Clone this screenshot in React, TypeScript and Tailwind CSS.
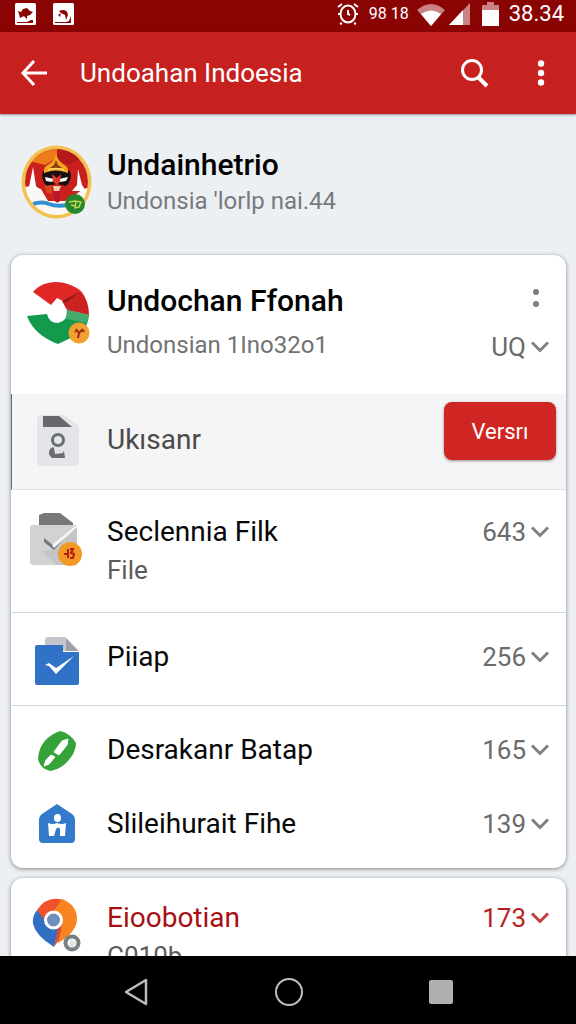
import type { ReactNode } from 'react';

const Chevron = () => (
  <svg viewBox="0 0 20 14" className="w-5 h-3.5 shrink-0 opacity-85" fill="none" stroke="currentColor" strokeWidth="3">
    <path d="M2 2.5l8 8 8-8" />
  </svg>
);

const GarudaAvatar = () => (
  <svg viewBox="0 0 72 74" className="w-[72px] h-[74px]">
    <clipPath id="avatar"><ellipse cx="35.5" cy="37" rx="31.5" ry="33" /></clipPath>
    <ellipse cx="35.5" cy="37" rx="35" ry="36.5" fill="#f2c14e" />
    <g clipPath="url(#avatar)">
      <rect width="72" height="74" fill="#fbf7f2" />
      <path d="M0 0h72v42l-10 2-8 6-10 6H27l-7-12-8-3-12 1z" fill="#c9201c" />
      <path d="M0 0h36v13l-12 7L8 16z" fill="#ef7a1a" />
      <path d="M36 4v10l12 6 14-8L50 0z" fill="#b3181a" />
      <path d="M12 22l-4 20-2 4h14l-5-5zM57 24l-1 16-5 6h14l-4-6z" fill="#fff" />
      <path d="M22 26q14-6 27 0 3 9-4 15l-9-2-10 2q-7-6-4-15z" fill="#1b1011" />
      <path d="M23 41l8-1v9l-5-1z" fill="#d9481c" />
      <path d="M35 9q2 7 7 10 6 3 5 9-12-5-24 0-1-6 5-9t7-10z" fill="#f3a51f" />
      <path d="M35 15l2 5 4 3h-12l4-3z" fill="#8a3f10" />
      <path d="M27 25q8-3 16 0" stroke="#ffd767" strokeWidth="1.5" fill="none" />
      <path d="M24 32l9 2-2 3-6-1zM38 34l9-2-2 4-6 1z" fill="#fff" />
      <path d="M31 29l5 4 4-4-1 8-3 3-4-3z" fill="#e1382a" />
      <path d="M32 41h8l-2 5h-5z" fill="#f1cfae" />
      <path d="M33 46h6v10q-3 3-5 0z" fill="#b5182b" />
      <path d="M12 59q9-3 16 0 8 3 19 1" stroke="#2f8fd0" strokeWidth="4" fill="none" />
    </g>
    <circle cx="54" cy="59" r="10" fill="#26862b" />
    <path d="M48 57l6-1 6 1-2 5-5 1M50 60l4 1M55 57l-1 5" fill="none" stroke="#b9d957" strokeWidth="1.5" />
  </svg>
);

const RibbonIcon = () => (
  <svg viewBox="0 0 66 66" className="w-[66px] h-[66px]">
    <path d="M7 11C17-1 38-3 55 10L37 20 31 17 25 24z" fill="#df2826" />
    <path d="M55 10Q63 20 63 34L41 29 36 20z" fill="#cc2221" />
    <path d="M55 10L36 20l4 2z" fill="#98191b" />
    <path d="M1 35l20-2q2 9 11 9 10-2 9-13l22 5q-2 17-14 21L32 63Q8 54 1 35z" fill="#139a4c" />
    <path d="M41 29l22 5-2 8-21-4z" fill="#45a86c" />
    <circle cx="53" cy="52" r="10.5" fill="#f2a02f" />
    <path d="M50 48l3 4 4-4M53 52l-1 5M49 50l1 1M57 51l1-2" stroke="#9c2a12" strokeWidth="2" fill="none" />
  </svg>
);

const ContactFileIcon = () => (
  <svg viewBox="0 0 42 52" className="w-[42px] h-[52px]">
    <path d="M5 1h22l15 11v36q0 4-4 4H4q-4 0-4-4V5q0-4 5-4z" fill="#e3e5e8" />
    <path d="M6 2h16l13 11H6z" fill="#67686b" />
    <circle cx="21" cy="26" r="5.5" fill="#dfe6ed" stroke="#6c6d70" strokeWidth="3" />
    <path d="M13 35l3-2q3 4 11 4l1 7H15q-5-4-2-9z" fill="#6c6d70" />
    <path d="M17 34q6 4 10 2l-1 3-8 1z" fill="#e3e5e8" />
  </svg>
);

const EnvelopeIcon = () => (
  <svg viewBox="0 0 54 56" className="w-[54px] h-14">
    <path d="M9 3l5-2h16l13 10v5H9z" fill="#77787a" />
    <path d="M3 13h44v37q0 3-3 3H3q-3 0-3-3V16q0-3 3-3z" fill="#d0d2d4" />
    <path d="M47 15v38H26L12 39l12-2z" fill="#c3c5c7" />
    <path d="M14 26l9 7L46 13 24 38 14 30z" fill="#77787a" />
    <path d="M22 33L46 13l1 2-23 21z" fill="#f6f6f6" />
    <circle cx="40" cy="42" r="12" fill="#f39a26" />
    <path d="M34 42h5M38 37v9M40 37h3l-2 4 3 1-1 4h-3" stroke="#b3200f" strokeWidth="2" fill="none" />
  </svg>
);

const TaskFileIcon = () => (
  <svg viewBox="0 0 44 48" className="w-11 h-12">
    <path d="M10 3q0-3 3-3h17l14 14H10z" fill="#c3c6ca" />
    <path d="M31 1l12 13H31z" fill="#9c9fa5" />
    <path d="M2 8h26v7h16v31q0 2-2 2H2q-2 0-2-2V10q0-2 2-2z" fill="#2f72c6" />
    <path d="M10 28l4-2 7 5 18-12-18 18-7-8z" fill="#fff" />
  </svg>
);

const LeafIcon = () => (
  <svg viewBox="0 0 38 42" className="w-[38px] h-[42px]">
    <path d="M22 1q10 2 16 12c0 12-12 26-26 28Q1 38 0 28 2 8 22 1z" fill="#36a33a" />
    <path d="M24 11l6-2-1 6-8 10-5-3zM13 25l4 2-6 7-5 2 2-6z" fill="#fff" stroke="#fff" />
  </svg>
);

const HouseIcon = () => (
  <svg viewBox="0 0 38 40" className="w-[38px] h-10">
    <path d="M19 0l15 10q3 2 3 5v20q0 4-4 4H5q-4 0-4-4V15q0-3 3-5z" fill="#347acb" />
    <ellipse cx="19.500" cy="14" rx="3.500" ry="4" fill="#fff" />
    <path d="M10 19q5 2 9 0 5 2 9 0l-1 13h-5v-7q-2-3-4 0l-2 7h-5z" fill="#fff" />
  </svg>
);

const PinIcon = () => (
  <svg viewBox="0 0 50 54" className="w-[50px] h-[54px]">
    <path d="M5 12Q0 18 1 26q3 12 21 23l5-20z" fill="#3070c2" />
    <path d="M5 12Q16-4 34 3L24 18 14 24z" fill="#f0522b" />
    <path d="M30 1q15 6 15 20 0 13-19 24l1-18-8-10z" fill="#f78421" />
    <path d="M26 28l-4 21 5-7 3-15z" fill="#d74f3c" />
    <circle cx="21.500" cy="22" r="8" fill="#6c90b9" stroke="#fff" strokeWidth="3" />
    <circle cx="40" cy="45" r="6.500" fill="#fff" stroke="#7b7e80" strokeWidth="4" />
    <path d="M39 41l5 4-3 4-4-1z" fill="#dfe2e3" />
  </svg>
);

type RowProps = {
  icon: ReactNode;
  title: string;
  subtitle?: string;
  count: string;
  className: string;
  accent?: boolean;
};

const FileRow = ({ icon, title, subtitle, count, className, accent }: RowProps) => (
  <div className={`flex pr-4 ${className}`}>
    <div className="w-24 pr-1 shrink-0 flex justify-center">{icon}</div>
    <div className="flex-1 min-w-0 whitespace-nowrap">
      <h3 className={`text-[28px] leading-10 ${accent ? 'text-[#a80f13]' : 'text-[#080808]'}`}>{title}</h3>
      {subtitle && <p className="text-[26px] leading-9 text-[#5c5c5c]">{subtitle}</p>}
    </div>
    <button className={`h-10 flex items-center gap-1 text-[26px] leading-10 ${accent ? 'text-[#b81d21]' : 'text-[#6b6b6b]'}`}>
      {count} <Chevron />
    </button>
  </div>
);

const StatusBar = () => (
  <div className="h-8 shrink-0 bg-[#8b0404] text-white flex items-center justify-between pl-[15px] pr-3">
    <div className="flex gap-[17px] pb-1">
      <svg viewBox="0 0 21 22" className="w-[21px] h-[22px]">
        <rect width="21" height="22" rx="1.500" fill="#fff" />
        <path d="M3 8l3 1 2-3 4-1 3 3 3 1-3 3-3 1v3l-3-3-4 2-1-4zM2 19l10 0 4-2h2v3H2z" fill="#8b0404" />
      </svg>
      <svg viewBox="0 0 21 22" className="w-[21px] h-[22px]">
        <rect width="21" height="22" rx="1.500" fill="#fff" />
        <path d="M6 8q8-3 9 4l-2 5-1-5-4-2-1 4-2-2 3-2zM2 19h11l3-1 2-5v7H2z" fill="#8b0404" />
      </svg>
    </div>
    <div className="flex items-center pb-1">
      <svg viewBox="0 0 22 24" className="w-[22px] h-6 mr-2.5" fill="none" stroke="#fff" strokeWidth="2">
        <ellipse cx="11" cy="12" rx="7.500" ry="8.500" />
        <path d="M1 5l4-3M17 2l4 3M1 12h3M18 12h3M5 21l-2 1M17 21l2 1M11 8v4l2 1" />
      </svg>
      <span className="text-[16px] leading-7 mr-2">98 18</span>
      <svg viewBox="0 0 28 23" className="w-7 h-[23px] mr-1">
        <path d="M0 7Q14-5 28 7L14 23z" fill="#c98383" />
        <path d="M4 11q10-7 20 0L14 23z" fill="#fff" />
      </svg>
      <svg viewBox="0 0 21 22" className="w-[21px] h-[22px] mr-3">
        <path d="M0 22L21 0v22z" fill="#c98383" />
        <path d="M0 22L14 7v15z" fill="#fff" />
      </svg>
      <svg viewBox="0 0 17 24" className="w-[17px] h-6 mr-2.5">
        <path d="M5 0h7v3h5v5H0V3h5z" fill="#c98383" />
        <path d="M0 8h17v16H0z" fill="#fff" />
      </svg>
      <span className="text-[22px] leading-7">38.34</span>
    </div>
  </div>
);

const AppBar = () => (
  <header className="h-[82px] shrink-0 bg-[#c7211f] text-white flex items-center pl-5 pr-6 shadow-[0_1px_2px_rgba(0,0,0,0.4)] z-10">
    <button aria-label="Back">
      <svg viewBox="0 0 28 28" className="w-7 h-7" fill="none" stroke="currentColor" strokeWidth="3">
        <path d="M14 2L3 14l11 12M3 14h24" />
      </svg>
    </button>
    <h1 className="flex-1 pl-8 text-[26px] leading-9 whitespace-nowrap">Undoahan Indoesia</h1>
    <button aria-label="Search" className="mr-10">
      <svg viewBox="0 0 30 30" className="w-[30px] h-[30px]" fill="none" stroke="currentColor" strokeWidth="3">
        <circle cx="12" cy="12" r="9.500" />
        <path d="M18 19l9 9" strokeWidth="4" />
      </svg>
    </button>
    <button aria-label="More options" className="w-[22px] flex justify-center">
      <svg viewBox="0 0 8 28" className="w-2 h-7" fill="currentColor">
        <circle cx="4" cy="4.500" r="3.200" />
        <circle cx="4" cy="14" r="3.200" />
        <circle cx="4" cy="23.500" r="3.200" />
      </svg>
    </button>
  </header>
);

const NavBar = () => (
  <nav className="h-[68px] shrink-0 bg-black flex items-center justify-center gap-[126px] pt-1">
    <button aria-label="Back">
      <svg viewBox="0 0 26 28" className="w-[26px] h-7" fill="none" stroke="#bdbdbd" strokeWidth="2.500" strokeLinejoin="round">
        <path d="M23 2v24L3 14z" />
      </svg>
    </button>
    <button aria-label="Home" className="w-7 h-7 rounded-full border-2 border-[#bdbdbd]" />
    <button aria-label="Recent apps" className="w-6 h-6 rounded-[2px] bg-[#b0b0b0]" />
  </nav>
);

const App = () => {
  return (
    <div className="h-screen flex flex-col overflow-hidden bg-[#edf0f3] font-[Roboto,sans-serif]">
      <StatusBar />
      <AppBar />

      <main className="flex-1 min-h-0 overflow-hidden pl-[11px] pr-2.5">
        {/* Profile */}
        <section className="h-[141px] flex pt-[31px]">
          <div className="w-24 pr-1 shrink-0 flex justify-center"><GarudaAvatar /></div>
          <div className="whitespace-nowrap">
            <h2 className="text-[30px] leading-10 font-medium text-black">Undainhetrio</h2>
            <p className="text-[24px] leading-8 text-[#777a7d]">Undonsia 'lorlp nai.44</p>
          </div>
        </section>

        {/* Downloads */}
        <section className="bg-white rounded-xl overflow-hidden shadow-[0_1px_4px_rgba(0,0,0,0.45)]">
          <div className="h-[139px] flex pt-[26px] pr-4">
            <div className="w-24 shrink-0 flex justify-center"><RibbonIcon /></div>
            <div className="flex-1 whitespace-nowrap">
              <h2 className="text-[30px] leading-10 font-medium text-black">Undochan Ffonah</h2>
              <p className="pt-1 text-[24px] leading-10 text-[#727272]">Undonsian 1Ino32o1</p>
            </div>
            <div className="flex flex-col items-end">
              <button aria-label="Item options" className="h-[34px] w-7 flex items-center justify-center">
                <svg viewBox="0 0 6 20" className="w-1.5 h-5" fill="#7d7d7d">
                  <circle cx="3" cy="4" r="3" />
                  <circle cx="3" cy="16" r="3" />
                </svg>
              </button>
              <button className="mt-3 flex items-center gap-1 text-[26px] leading-10 text-[#6b6b6b]">UQ <Chevron /></button>
            </div>
          </div>

          <div className="h-24 flex pt-2 pr-2.5 bg-[#f5f5f5] border-l border-[#4d7775] border-b border-b-[#e3e5e5]">
            <div className="w-[95px] pr-1 pt-3 shrink-0 flex justify-center"><ContactFileIcon /></div>
            <h3 className="flex-1 pt-[18px] text-[28px] leading-10 text-[#4a4a4a]">Ukısanr</h3>
            <button className="w-28 h-[58px] rounded-lg bg-[#d02623] text-white text-[22px] shadow-[0_1px_3px_rgba(0,0,0,0.4)]">Versrı</button>
          </div>

          <FileRow icon={<EnvelopeIcon />} title="Seclennia Filk" subtitle="File" count="643" className="h-[122px] pt-[22px]" />
          <FileRow icon={<TaskFileIcon />} title="Piiap" count="256" className="h-[94px] pt-6 border-y border-[#d5d8da]" />
          <div className="pt-1.5 pb-1">
            <FileRow icon={<LeafIcon />} title="Desrakanr Batap" count="165" className="h-[76px] pt-[18px]" />
            <FileRow icon={<HouseIcon />} title="Slileihurait Fihe" count="139" className="h-[76px] pt-4" />
          </div>
        </section>

        <section className="mt-2.5 bg-white rounded-xl shadow-[0_1px_4px_rgba(0,0,0,0.45)]">
          <FileRow icon={<PinIcon />} title="Eioobotian" subtitle="C010b" count="173" className="h-[122px] pt-[20px]" accent />
        </section>
      </main>

      <NavBar />
    </div>
  );
};

export default App;
